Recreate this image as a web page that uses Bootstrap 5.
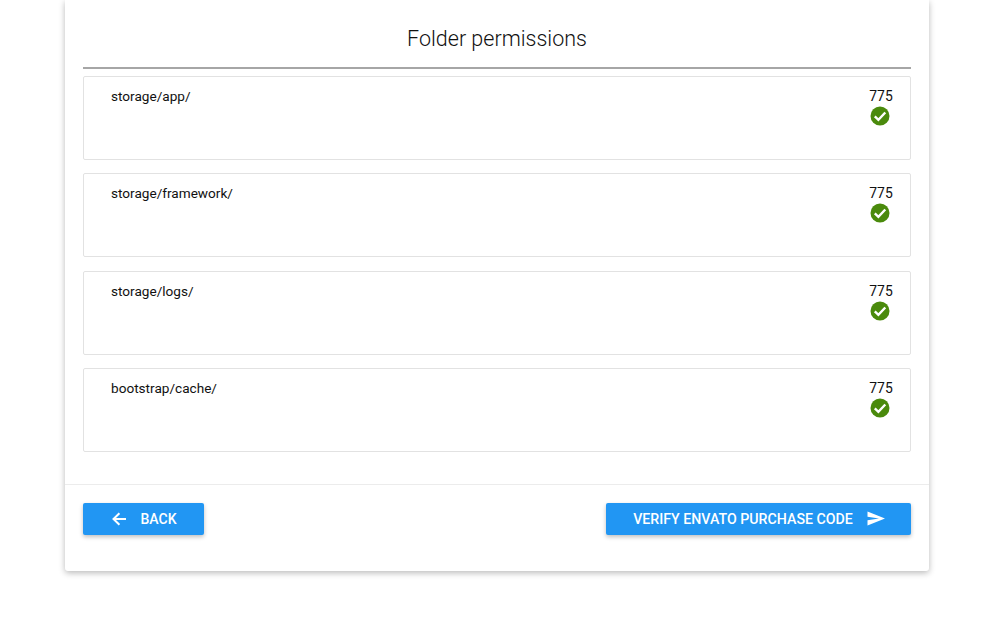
<!DOCTYPE html>
<html lang="en">
<head>
<meta charset="utf-8">
<title>Folder permissions</title>
<link href="https://cdn.jsdelivr.net/npm/bootstrap@5.3.0/dist/css/bootstrap.min.css" rel="stylesheet">
<style>
html,body{height:628px;overflow:hidden;background:#fff}
body{font-family:Roboto,"Liberation Sans",sans-serif;font-size:13.6px;color:#111}
.sheet{margin-left:65px;width:864px;height:571px;background:#fff;border-radius:0 0 3px 3px;box-shadow:0 2px 6px rgba(0,0,0,.28);display:flex;flex-direction:column}
.sheet-head{padding:0 18px}
.sheet-title{font-size:21.5px;font-weight:300;line-height:26px;text-align:center;color:#111;margin:0;padding:26px 0 15px;border-bottom:2px solid #a6a6a6;height:69px}
.perm-list{padding:7px 18px 0;display:flex;flex-direction:column;gap:13.33px}
.perm-row{height:84px;border:1px solid #e2e2e2;border-radius:2px;padding:9px 17px 0 27px;display:flex;justify-content:space-between;line-height:20px;color:#111}
.perm-state{display:flex;flex-direction:column;align-items:center;width:24px;font-size:13.9px}
.perm-state svg{display:block;margin-left:-2px}
.sheet-foot{margin-top:32px;border-top:1px solid #ececec;padding:18px 18px 0;display:flex;justify-content:space-between}
.act-btn{height:32px;background:#2196f3;border:0;border-radius:2px;color:#fff;font-size:14.2px;font-weight:500;padding:0;display:flex;align-items:center;justify-content:center;box-shadow:0 2px 4px rgba(0,0,0,.25)}
.act-btn:hover{background:#2196f3;color:#fff}
.act-btn span{padding-top:1px}
.back-btn{width:121px;gap:14px;padding-left:2px}
.back-btn span{font-size:14px}
.next-btn{width:305px;gap:14px;padding-left:1px}
</style>
</head>
<body>
<div class="sheet">
  <div class="sheet-head"><h1 class="sheet-title">Folder permissions</h1></div>
  <div class="perm-list">
    <div class="perm-row"><span>storage/app/</span><div class="perm-state"><span>775</span><svg width="20" height="20" viewBox="0 0 20 20"><circle cx="10" cy="10" r="9.5" fill="#4a8a0c"/><path d="M4.8 10.3l3.6 3.5 6.9-7.3" fill="none" stroke="#fff" stroke-width="2.4"/></svg></div></div>
    <div class="perm-row"><span>storage/framework/</span><div class="perm-state"><span>775</span><svg width="20" height="20" viewBox="0 0 20 20"><circle cx="10" cy="10" r="9.5" fill="#4a8a0c"/><path d="M4.8 10.3l3.6 3.5 6.9-7.3" fill="none" stroke="#fff" stroke-width="2.4"/></svg></div></div>
    <div class="perm-row"><span>storage/logs/</span><div class="perm-state"><span>775</span><svg width="20" height="20" viewBox="0 0 20 20"><circle cx="10" cy="10" r="9.5" fill="#4a8a0c"/><path d="M4.8 10.3l3.6 3.5 6.9-7.3" fill="none" stroke="#fff" stroke-width="2.4"/></svg></div></div>
    <div class="perm-row"><span>bootstrap/cache/</span><div class="perm-state"><span>775</span><svg width="20" height="20" viewBox="0 0 20 20"><circle cx="10" cy="10" r="9.5" fill="#4a8a0c"/><path d="M4.8 10.3l3.6 3.5 6.9-7.3" fill="none" stroke="#fff" stroke-width="2.4"/></svg></div></div>
  </div>
  <div class="sheet-foot">
    <button type="button" class="btn act-btn back-btn"><svg width="14" height="14" viewBox="0 0 14 14"><path d="M14 7H2.5M7.4 1.2L1.5 7l5.9 5.8" fill="none" stroke="#fff" stroke-width="2"/></svg><span>BACK</span></button>
    <button type="button" class="btn act-btn next-btn"><span>VERIFY ENVATO PURCHASE CODE</span><svg width="18" height="15" viewBox="0 0 18 15"><path d="M0.5 0.5L18 7.5L0.5 14.5L0.5 9.2L12 7.5L0.5 5.8Z" fill="#fff"/></svg></button>
  </div>
</div>
<script src="https://cdn.jsdelivr.net/npm/bootstrap@5.3.0/dist/js/bootstrap.bundle.min.js"></script>
</body>
</html>
